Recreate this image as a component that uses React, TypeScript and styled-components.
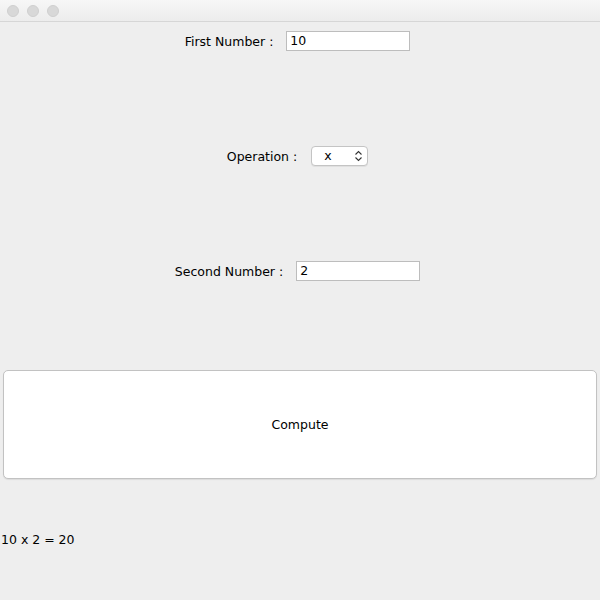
import React from 'react';
import styled, { createGlobalStyle } from 'styled-components';

const GlobalStyle = createGlobalStyle`
  html, body {
    margin: 0;
    padding: 0;
    background: #eeeeee;
  }
  * { box-sizing: border-box; }
`;

const Window = styled.div`
  width: 600px;
  height: 600px;
  display: flex;
  flex-direction: column;
  background: #eeeeee;
  font-family: 'DejaVu Sans', 'Open Sans', sans-serif;
  font-size: 12.5px;
  color: #000;
`;

const TitleBar = styled.div`
  height: 22px;
  flex: none;
  display: flex;
  align-items: center;
  gap: 8px;
  padding-left: 7px;
  background: linear-gradient(#f7f7f7, #ececec);
  border-bottom: 1px solid #d6d6d6;
`;

const Light = styled.span`
  width: 12px;
  height: 12px;
  border-radius: 50%;
  background: #d8d8d8;
  border: 1px solid #cfcfcf;
`;

const Content = styled.div`
  flex: 1;
  display: grid;
  grid-template-rows: repeat(4, 115px) 1fr;
`;

const FlowRow = styled.div`
  display: flex;
  justify-content: center;
  align-items: flex-start;
  padding-top: 9px;
  padding-right: 5px;
  gap: 9px;
`;

const Label = styled.span`
  line-height: 21px;
  white-space: pre;
`;

const TextField = styled.div`
  width: 124px;
  height: 20px;
  background: #fff;
  border: 1px solid #bdbdbd;
  padding: 0 3px;
  line-height: 18px;
`;

const Combo = styled.div`
  width: 57px;
  height: 20px;
  margin-left: 1px;
  background: #fff;
  border: 1px solid #c4c4c4;
  border-radius: 4px;
  box-shadow: 0 1px 0 rgba(0, 0, 0, 0.06);
  display: flex;
  align-items: center;
  padding-left: 12px;
  padding-right: 4px;
  justify-content: space-between;
  line-height: 18px;
`;

const ButtonRow = styled.div`
  display: flex;
  padding: 3px 3px 3px 3px;
`;

const Button = styled.div`
  flex: 1;
  background: #fff;
  border: 1px solid #c2c2c2;
  border-radius: 5px;
  box-shadow: 0 1px 1px rgba(0, 0, 0, 0.08);
  display: flex;
  align-items: center;
  justify-content: center;
`;

const ResultRow = styled.div`
  display: flex;
  align-items: center;
  padding-left: 1px;
  padding-bottom: 4px;
`;

const Arrows = () => (
  <svg width="9" height="12" viewBox="0 0 9 12">
    <path d="M1.5 4.5 L4.5 1.5 L7.5 4.5 M1.5 7.5 L4.5 10.5 L7.5 7.5" fill="none" stroke="#333" strokeWidth="1.1" />
  </svg>
);

export default function App() {
  return (
    <Window>
      <GlobalStyle />
      <TitleBar>
        <Light />
        <Light />
        <Light />
      </TitleBar>
      <Content>
        <FlowRow>
          <Label>First Number : </Label>
          <TextField>10</TextField>
        </FlowRow>
        <FlowRow>
          <Label>Operation : </Label>
          <Combo>
            <span>x</span>
            <Arrows />
          </Combo>
        </FlowRow>
        <FlowRow>
          <Label>Second Number : </Label>
          <TextField>2</TextField>
        </FlowRow>
        <ButtonRow>
          <Button>Compute</Button>
        </ButtonRow>
        <ResultRow>10 x 2 = 20</ResultRow>
      </Content>
    </Window>
  );
}
